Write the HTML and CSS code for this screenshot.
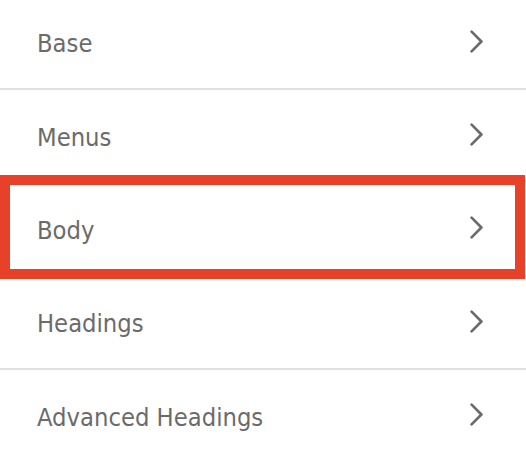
FILE: index.html
```html
<!DOCTYPE html>
<html lang="en">
<head>
<meta charset="utf-8">
<title>Menu</title>
<link rel="stylesheet" href="styles.css">
</head>
<body>
<ul class="menu">
  <li class="row"><span class="label">Base</span><svg class="chev" viewBox="0 0 13 23" width="13" height="23"><path d="M1.6 1.6 L11.4 11.5 L1.6 21.4"/></svg></li>
  <li class="row"><span class="label">Menus</span><svg class="chev" viewBox="0 0 13 23" width="13" height="23"><path d="M1.6 1.6 L11.4 11.5 L1.6 21.4"/></svg></li>
  <li class="row highlighted"><span class="label">Body</span><svg class="chev" viewBox="0 0 13 23" width="13" height="23"><path d="M1.6 1.6 L11.4 11.5 L1.6 21.4"/></svg></li>
  <li class="row"><span class="label">Headings</span><svg class="chev" viewBox="0 0 13 23" width="13" height="23"><path d="M1.6 1.6 L11.4 11.5 L1.6 21.4"/></svg></li>
  <li class="row"><span class="label">Advanced Headings</span><svg class="chev" viewBox="0 0 13 23" width="13" height="23"><path d="M1.6 1.6 L11.4 11.5 L1.6 21.4"/></svg></li>
</ul>
</body>
</html>
```

FILE: styles.css
```css
html, body {
  margin: 0;
  padding: 0;
  background: #ffffff;
}

body {
  width: 526px;
  height: 460px;
  overflow: hidden;
  font-family: "DejaVu Sans Condensed", "DejaVu Sans", sans-serif;
}

.menu {
  list-style: none;
  margin: -3.333px 0 0 0;
  padding: 0;
}

.row {
  position: relative;
  box-sizing: border-box;
  height: 93.333px;
  display: flex;
  align-items: center;
  justify-content: space-between;
  padding: 3px 43px 0 37px;
  border-bottom: 2px solid #e0e0e0;
}

.label {
  font-size: 25.3px;
  color: #6b6b6b;
  line-height: 1;
}

.chev {
  display: block;
  margin-top: -5px;
}

.chev path {
  fill: none;
  stroke: #6b6b6b;
  stroke-width: 2.7;
  stroke-linecap: round;
  stroke-linejoin: round;
}

.highlighted::after {
  content: "";
  position: absolute;
  left: 0;
  right: 1px;
  top: -8.5px;
  bottom: -4.5px;
  border: 10px solid #e8412a;
  pointer-events: none;
}
```
